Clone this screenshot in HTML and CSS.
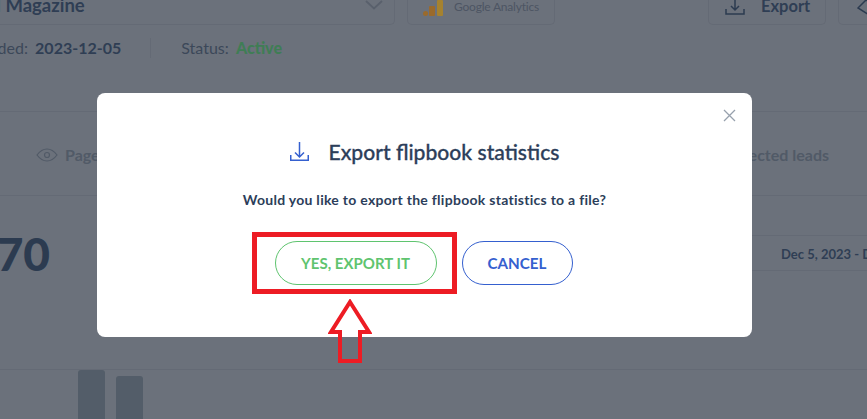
FILE: index.html
```html
<!DOCTYPE html>
<html lang="en">
<head>
<meta charset="UTF-8">
<meta name="viewport" content="width=device-width, initial-scale=1.0">
<title>Export flipbook statistics</title>
<link rel="stylesheet" href="styles.css">
</head>
<body>

<div class="page">
    <div class="top-row">
        <div class="select-box">
            <span class="select-name">Digital Magazine</span>
            <svg class="chevron" width="18" height="10" viewBox="0 0 18 10"><path d="M1 1l8 7.500 8-7.500" fill="none" stroke="#59606c" stroke-width="1.800"/></svg>
        </div>
        <div class="tool-btn ga-btn">
            <svg width="20" height="16" viewBox="0 0 20 16"><circle cx="2.500" cy="13.500" r="2.500" fill="#9a6a2c"/><rect x="6" y="6" width="6" height="10" rx="1" fill="#9a6a2c"/><rect x="14" y="0" width="6" height="16" rx="1" fill="#a5822f"/></svg>
            <span>Google Analytics</span>
        </div>
        <div class="tool-btn export-btn">
            <svg width="20" height="15" viewBox="0 0 20 15"><path d="M1 9v5h18V9M10 0v9.500M6 6l4 4 4-4" fill="none" stroke="#2c3b50" stroke-width="1.500"/></svg>
            <span>Export</span>
        </div>
        <div class="tool-btn more-btn">
            <svg width="20" height="18" viewBox="0 0 20 18"><path d="M1 8l8-8 10 7-7 8z" fill="none" stroke="#2c3b50" stroke-width="1.500"/></svg>
        </div>
    </div>

    <div class="meta-row">
        <div class="meta-item">Added: <b>2023-12-05</b></div>
        <div class="meta-item status">Status: <b>Active</b></div>
    </div>

    <div class="tabs">
        <div class="tab">
            <svg width="22" height="14" viewBox="0 0 22 14"><path d="M1 7c3-4 6-6 10-6s7 2 10 6c-3 4-6 6-10 6S4 11 1 7z" fill="none" stroke="#515a67" stroke-width="1.200"/><circle cx="11" cy="7" r="2.500" fill="none" stroke="#515a67" stroke-width="1.200"/></svg>
            <span>Page views</span>
        </div>
        <div class="tab">Collected leads</div>
    </div>

    <div class="stats-row">
        <div class="big-number">870</div>
        <div class="date-range">Dec 5, 2023 - Dec 5, 2023</div>
    </div>

    <div class="chart">
        <div class="bar"></div>
        <div class="bar bar-short"></div>
    </div>
</div>

<div class="overlay">
    <div class="modal">
        <svg class="close" width="13" height="13" viewBox="0 0 13 13"><path d="M1 1l11 11M12 1L1 12" fill="none" stroke="#97a1ad" stroke-width="1.300"/></svg>
        <div class="modal-title">
            <svg width="19" height="19" viewBox="0 0 19 19"><path d="M.75 13v5.250h17.500V13M9.500 0v15M5 10.500l4.500 4.500 4.500-4.500" fill="none" stroke="#3560cf" stroke-width="1.500"/></svg>
            <h2>Export flipbook statistics</h2>
        </div>
        <p>Would you like to export the flipbook statistics to a file?</p>
        <div class="modal-actions">
            <button class="btn btn-yes">YES, EXPORT IT</button>
            <button class="btn btn-cancel">CANCEL</button>
        </div>
    </div>
</div>

<!-- red markup drawn on top of the screenshot -->
<div class="mark-box"></div>
<svg class="mark-arrow" width="44" height="66" viewBox="0 0 44 66"><path d="M22 3L41 33H32V62H12V33H3Z" fill="none" stroke="#ed1c24" stroke-width="4"/></svg>

</body>
</html>
```

FILE: styles.css
```css
body {
    margin: 0;
    font-family: 'Lato', sans-serif;
    background-color: #6b717b;
    color: #2c3b50;
    overflow: hidden;
}

.page {
    height: 419px;
    overflow: hidden;
}

.top-row {
    display: flex;
    height: 25px;
    margin-left: -45px;
}

.select-box {
    flex: none;
    width: 440px;
    display: flex;
    justify-content: space-between;
    align-items: flex-start;
    border: 1px solid #646a75;
    border-top: none;
    border-radius: 0 0 5px 5px;
    padding-right: 11px;
    box-sizing: border-box;
    margin-right: 12px;
}

.select-name {
    margin-left: -9px;
    font-size: 18.500px;
    font-weight: 700;
    color: #2f3e54;
    line-height: 11px;
    white-space: nowrap;
}

.tool-btn {
    flex: none;
    display: flex;
    align-items: flex-start;
    border: 1px solid #646a75;
    border-top: none;
    border-radius: 0 0 5px 5px;
    box-sizing: border-box;
}

.ga-btn {
    width: 148px;
    margin-right: 153px;
    padding-left: 15px;
    gap: 11px;
    font-size: 12px;
    letter-spacing: -0.200px;
    line-height: 13px;
    color: #4d5563;
    white-space: nowrap;
}

.export-btn {
    width: 118px;
    margin-right: 12px;
    padding-left: 16px;
    gap: 16px;
    font-size: 16.500px;
    font-weight: 700;
    line-height: 12px;
    color: #2f3e54;
}

.more-btn {
    width: 60px;
    padding-left: 18px;
}

.meta-row {
    display: flex;
    margin: 13px 0 0 -22px;
    height: 20px;
    font-size: 16px;
    line-height: 20px;
    color: #3c4859;
}

.meta-item b {
    margin-left: 3px;
    color: #2f3e54;
}

.status {
    margin-left: 29px;
    padding-left: 30px;
    border-left: 1px solid #646a75;
}

.status b {
    font-weight: 900;
    color: #3f7d55;
}

.tabs {
    display: flex;
    justify-content: space-between;
    align-items: center;
    height: 81px;
    margin-top: 53px;
    padding: 2px 38px 0 36px;
    border-top: 1px solid #646a75;
    border-bottom: 1px solid #646a75;
    font-size: 16px;
    font-weight: 700;
    color: #515a67;
}

.tab {
    display: flex;
    align-items: center;
    gap: 7px;
}

.stats-row {
    display: flex;
    justify-content: space-between;
    align-items: center;
    margin-top: 39px;
    height: 36px;
}

.big-number {
    margin-left: -30px;
    font-size: 46px;
    font-weight: 900;
    color: #2c3b50;
}

.date-range {
    flex: none;
    width: 300px;
    height: 36px;
    box-sizing: border-box;
    padding-left: 214px;
    line-height: 36px;
    white-space: nowrap;
    overflow: hidden;
    border-top: 1px solid #646a75;
    border-bottom: 1px solid #646a75;
    font-size: 13px;
    font-weight: 700;
    color: #2f3e54;
}

.chart {
    display: flex;
    gap: 11px;
    margin-top: 98px;
    padding-left: 78px;
    height: 60px;
    border-top: 1px solid #646a75;
}

.bar {
    width: 27px;
    height: 60px;
    background-color: #535d69;
    border-radius: 3px 3px 0 0;
}

.bar-short {
    margin-top: 6px;
}

.overlay {
    position: fixed;
    top: 0;
    left: 0;
    right: 0;
    bottom: 0;
}

.modal {
    position: absolute;
    top: 93px;
    left: 97px;
    width: 655px;
    height: 244px;
    box-sizing: border-box;
    padding-top: 44px;
    background-color: #fff;
    border-radius: 8px;
    text-align: center;
}

.close {
    position: absolute;
    top: 16px;
    right: 16px;
}

.modal-title {
    display: flex;
    justify-content: center;
    align-items: center;
    gap: 20px;
    height: 28px;
}

h2 {
    margin: 0;
    font-size: 21.100px;
    font-weight: 500;
    -webkit-text-stroke: 0.300px #2c3e5a;
    color: #2c3e5a;
}

p {
    margin: 26px 0 0;
    font-size: 14px;
    font-weight: 700;
    letter-spacing: 0.280px;
    line-height: 18px;
    color: #2c3e5a;
}

.modal-actions {
    display: flex;
    justify-content: center;
    gap: 25px;
    margin-top: 32px;
    padding-right: 2px;
}

.btn {
    height: 44px;
    box-sizing: border-box;
    background-color: #fff;
    border-radius: 22px;
    font-family: 'Lato', sans-serif;
    font-size: 15.200px;
    font-weight: 700;
}

.btn-yes {
    width: 162px;
    border: 1px solid #5fc46f;
    font-size: 15px;
    color: #5fc46f;
}

.btn-cancel {
    width: 111px;
    border: 1px solid #3560cf;
    color: #3560cf;
}

.mark-box {
    position: absolute;
    top: 232px;
    left: 252px;
    width: 205px;
    height: 62px;
    box-sizing: border-box;
    border: 5px solid #ed1c24;
}

.mark-arrow {
    position: absolute;
    top: 299px;
    left: 328px;
}
```
